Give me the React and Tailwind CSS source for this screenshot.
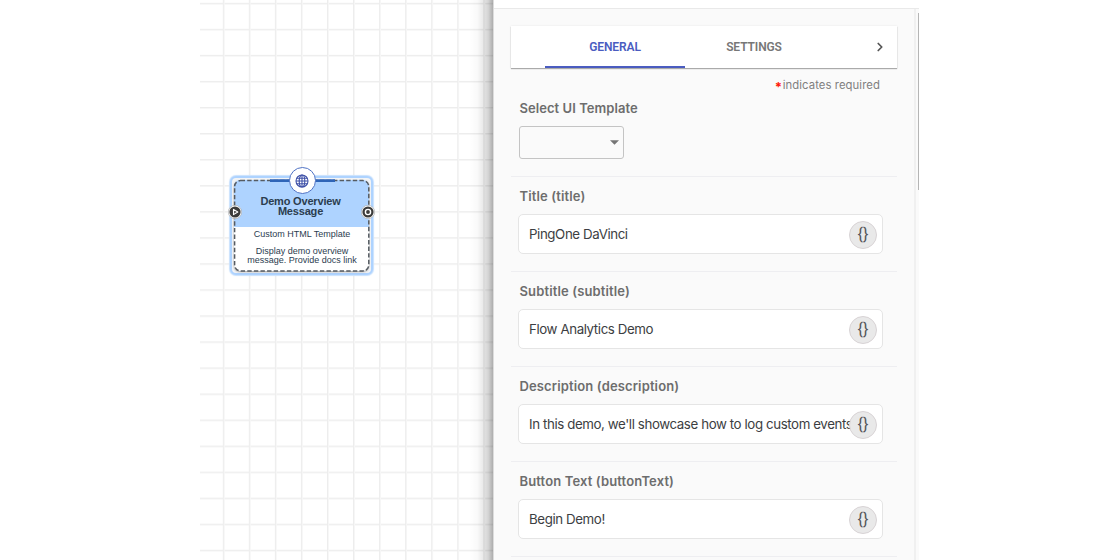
import { ChevronRight } from "lucide-react";

const fields = [
  { label: "Title (title)", value: "PingOne DaVinci" },
  { label: "Subtitle (subtitle)", value: "Flow Analytics Demo" },
  { label: "Description (description)", value: "In this demo, we'll showcase how to log custom events" },
  { label: "Button Text (buttonText)", value: "Begin Demo!" },
];

function Globe() {
  return (
    <svg viewBox="0 0 14 14" className="-ml-px h-[14px] w-[14px]" fill="none" stroke="#3f51a8" strokeWidth="1.1">
      <circle cx="7" cy="7" r="6" />
      <ellipse cx="7" cy="7" rx="2.8" ry="6" />
      <path d="M7 1v12M1 7h12M1.9 4.2h10.2M1.9 9.8h10.2" />
    </svg>
  );
}

function Port({ kind }) {
  return (
    <svg viewBox="0 0 14 14" className="h-[14px] w-[14px]">
      <circle cx="7" cy="7" r="6.7" fill="#fff" stroke="#999" strokeWidth=".5" />
      <circle cx="7" cy="7" r="5.6" fill="#3b3b3b" />
      {kind === "in" ? (
        <path d="M5.5 4.4v5.2L9.8 7z" fill="#555" stroke="#fff" strokeWidth="1.1" strokeLinejoin="round" />
      ) : (
        <circle cx="7" cy="7" r="2.6" fill="#3b3b3b" stroke="#fff" strokeWidth="1.4" />
      )}
    </svg>
  );
}

function FlowNode() {
  return (
    <div className="absolute left-[30px] top-[176px] h-[99px] w-[143px] rounded-[6px] border-2 border-[#aed3ff] bg-[#f3f4f6] p-[2px] shadow-[0_0_1px_1px_#c9e1fd]">
      <div className="flex h-[91px] w-[135px] flex-col overflow-hidden rounded-[6px] bg-white text-center font-['Liberation_Sans',sans-serif] text-[#2b3d4f] shadow-[0_1px_2px_0_rgba(0,0,0,0.35)]">
        <div className="flex h-[46.5px] flex-col items-center bg-[#aed3ff] pr-[2px] pt-[16px] text-[11px] font-bold leading-[10.4px] tracking-[-0.18px]">
          <span>Demo Overview</span>
          <span>Message</span>
        </div>
        <div className="pl-[1px] pt-[3.5px] text-[9px] leading-[9px]">Custom HTML Template</div>
        <div className="flex flex-col pl-[1px] pt-[8px] text-[9px] leading-[9px]">
          <span>Display demo overview</span>
          <span className="whitespace-nowrap">message. Provide docs link</span>
        </div>
      </div>
      <svg viewBox="0 0 143 99" className="absolute left-[-2px] top-[-2px] h-[99px] w-[143px]" fill="none">
        <rect x="4.6" y="4.6" width="134.2" height="90.3" rx="6" stroke="#555b62" strokeWidth="1.5" strokeDasharray="4.4 2.2" />
        <path d="M40 4.6h65" stroke="#2f65b8" strokeWidth="2.6" />
      </svg>
      <div className="absolute left-[57px] top-[-11px] flex h-[27px] w-[27px] items-center justify-center rounded-full border border-[#4f72c4] bg-white">
        <Globe />
      </div>
      <div className="absolute left-[-4.5px] top-[27px]"><Port kind="in" /></div>
      <div className="absolute left-[129.3px] top-[27px]"><Port kind="out" /></div>
    </div>
  );
}

function Field({ label, value }) {
  return (
    <div className="h-[95px] border-t border-[#eeeef1] pl-[7px]">
      <div className="flex h-[37px] items-center pl-[1.5px] pt-[2px] text-[13px] font-semibold tracking-[0.13px] text-[#6d6d6d]">{label}</div>
      <div className="relative flex h-[40px] w-[365px] items-center rounded-[5px] border border-[#e5e5e5] bg-white pl-[10px] text-[13.3px] text-[#3c3e42]">
        <span className="w-[323px] overflow-hidden whitespace-nowrap pt-[2px] tracking-[-0.4px]">{value}</span>
        <div className="absolute right-[5px] top-[5.5px] flex h-[28px] w-[28px] items-center justify-center rounded-full border border-[#d8d3d5] bg-[#e9e9e9]">
          <span className="font-['Roboto',sans-serif] text-[16px] leading-none text-[#55575a]">{"{}"}</span>
        </div>
      </div>
    </div>
  );
}

export default function App() {
  return (
    <div className="flex h-[560px] w-[1120px] overflow-hidden bg-white pl-[200px] font-['Inter',sans-serif]">
      <div className="relative w-[293px] shrink-0 bg-[linear-gradient(to_right,#ededed_0_1px,#f6f6f6_1px_2px,transparent_2px),linear-gradient(to_bottom,#ededed_0_1px,#f6f6f6_1px_2px,transparent_2px)] bg-[length:26.05px_26.05px] bg-[position:22.8px_2.8px]">
        <FlowNode />
        <div className="absolute right-0 top-0 h-full w-[24px] bg-[linear-gradient(to_right,transparent,rgba(0,0,0,0.025)_35%,rgba(0,0,0,0.09)_60%,rgba(0,0,0,0.17)_80%,rgba(0,0,0,0.32))]" />
      </div>
      <div className="flex w-[426px] shrink-0 flex-col border-l border-[#dcdcdc] bg-[#fafafa]">
        <div className="h-[9px] shrink-0 border-b border-[#e9e9e9] bg-white" />
        <div className="flex h-[551px]">
          <div className="w-[422px] shrink-0 border-r-2 border-[#f0f0f0] pl-[17px] pt-[17px]">
            <div className="flex h-[42px] w-[386px] bg-white pl-[34px] font-['Roboto',sans-serif] text-[12px] font-semibold tracking-[-0.1px] shadow-[0_1px_1px_rgba(0,0,0,0.3),0_0_2px_rgba(0,0,0,0.08)]">
              <div className="flex w-[140px] items-center justify-center border-b-2 border-[#4a5cc0] pt-[1px] text-[#4a5cc0]">GENERAL</div>
              <div className="flex w-[138px] items-center justify-center text-[#777]">SETTINGS</div>
              <div className="flex flex-1 items-center justify-end pr-[10px]">
                <ChevronRight size={14} strokeWidth={3} color="#555" />
              </div>
            </div>
            <div className="mt-[9px] flex h-[16px] w-[369px] items-center justify-end pt-[1px] text-[11.3px] tracking-[0.08px] text-[#808080]">
              <span className="mr-[2px] mt-[-1px] flex h-[8px] w-[6px] items-center pt-[4px] text-[13px] font-bold leading-none text-[#ff1a0a]">*</span>indicates required
            </div>
            <div className="h-[83px] pl-[8px]">
              <div className="flex h-[32px] items-center pb-[1px] pl-[0.5px] text-[13px] font-semibold tracking-[0.06px] text-[#6d6d6d]">Select UI Template</div>
              <div className="mt-[1px] flex h-[33px] w-[105px] items-center justify-end rounded-[3px] border border-[#c4c4c4] pr-[4px]">
                <svg viewBox="0 0 9 5" className="h-[5px] w-[9px]"><path d="M0 .3h9L4.5 4.8z" fill="#757575" /></svg>
              </div>
            </div>
            <div className="w-[386px]">
              {fields.map((f) => <Field key={f.label} {...f} />)}
              <div className="border-t border-[#eeeef1]" />
            </div>
          </div>
          <div className="flex-1 pl-[2px] pt-[4px]">
            <div className="h-[177px] w-px bg-[#b5b5b5]" />
          </div>
        </div>
      </div>
    </div>
  );
}
